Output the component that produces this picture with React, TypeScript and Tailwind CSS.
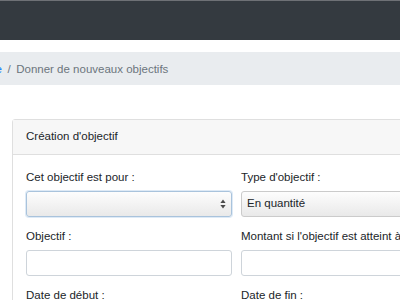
import React from 'react';

const SelectArrows: React.FC = () => (
    <svg width="6" height="10" viewBox="0 0 6 10" className="shrink-0">
        <path d="M3 0.5 L5.6 4 L0.4 4 Z" fill="#4a4a4a" />
        <path d="M3 9.5 L5.6 6 L0.4 6 Z" fill="#4a4a4a" />
    </svg>
);

const Field: React.FC<{ label: string; children: React.ReactNode }> = ({ label, children }) => (
    <div className="mb-[11px] min-w-0">
        <label className="block mb-[5.6px] leading-[16.8px] whitespace-nowrap text-[#212529]">{label}</label>
        {children}
    </div>
);

export default function App() {
    return (
        <div
            className="w-[400px] h-[300px] overflow-hidden bg-white text-[11.5px]"
            style={{ fontFamily: '"Liberation Sans", Arial, sans-serif' }}
        >
            {/* Navbar */}
            <div className="h-[40px] bg-[#343a40] border-t border-[#6e7176]" />

            {/* Breadcrumb */}
            <div className="mt-[12px] h-[33px] bg-[#e9ecef] flex items-center whitespace-nowrap leading-[16.8px] pt-[1px]">
                <span className="-ml-[34px] text-[#007bff]">Équipe</span>
                <span className="px-[5.6px] text-[#6c757d]">/</span>
                <span className="text-[#6c757d]">Donner de nouveaux objectifs</span>
            </div>

            {/* Card */}
            <div className="mt-[34px] ml-[12px] w-[449px] border border-[#dfdfdf] rounded-[3px]">
                <div className="bg-[#f7f7f7] border-b border-[#dfdfdf] px-[13px] py-[8.4px] leading-[16.8px] text-[#212529]">
                    Création d'objectif
                </div>
                <div className="p-[13px] pt-[14px]">
                    <div className="grid grid-cols-[206px_206px] gap-x-[9px]">
                        <Field label="Cet objectif est pour :">
                            <div className="h-[26px] rounded-[3px] border border-[#a9c3dc] bg-gradient-to-b from-[#fdfdfd] to-[#e9e9e9] shadow-[0_0_0_1px_rgba(160,195,230,0.35)] flex items-center justify-end pr-[5px]">
                                <SelectArrows />
                            </div>
                        </Field>
                        <Field label="Type d'objectif :">
                            <div className="h-[26px] rounded-[3px] border border-[#cbcbcb] bg-gradient-to-b from-[#fdfdfd] to-[#e9e9e9] flex items-center justify-between px-[5px] text-[#212529]">
                                <span>En quantité</span>
                                <SelectArrows />
                            </div>
                        </Field>
                        <Field label="Objectif :">
                            <div className="h-[26px] rounded-[3px] border border-[#ced4da] bg-white" />
                        </Field>
                        <Field label="Montant si l'objectif est atteint à 100 % :">
                            <div className="h-[26px] rounded-[3px] border border-[#ced4da] bg-white" />
                        </Field>
                        <Field label="Date de début :">
                            <div className="h-[26px] rounded-[3px] border border-[#ced4da] bg-white" />
                        </Field>
                        <Field label="Date de fin :">
                            <div className="h-[26px] rounded-[3px] border border-[#ced4da] bg-white" />
                        </Field>
                    </div>
                </div>
            </div>
        </div>
    );
}
